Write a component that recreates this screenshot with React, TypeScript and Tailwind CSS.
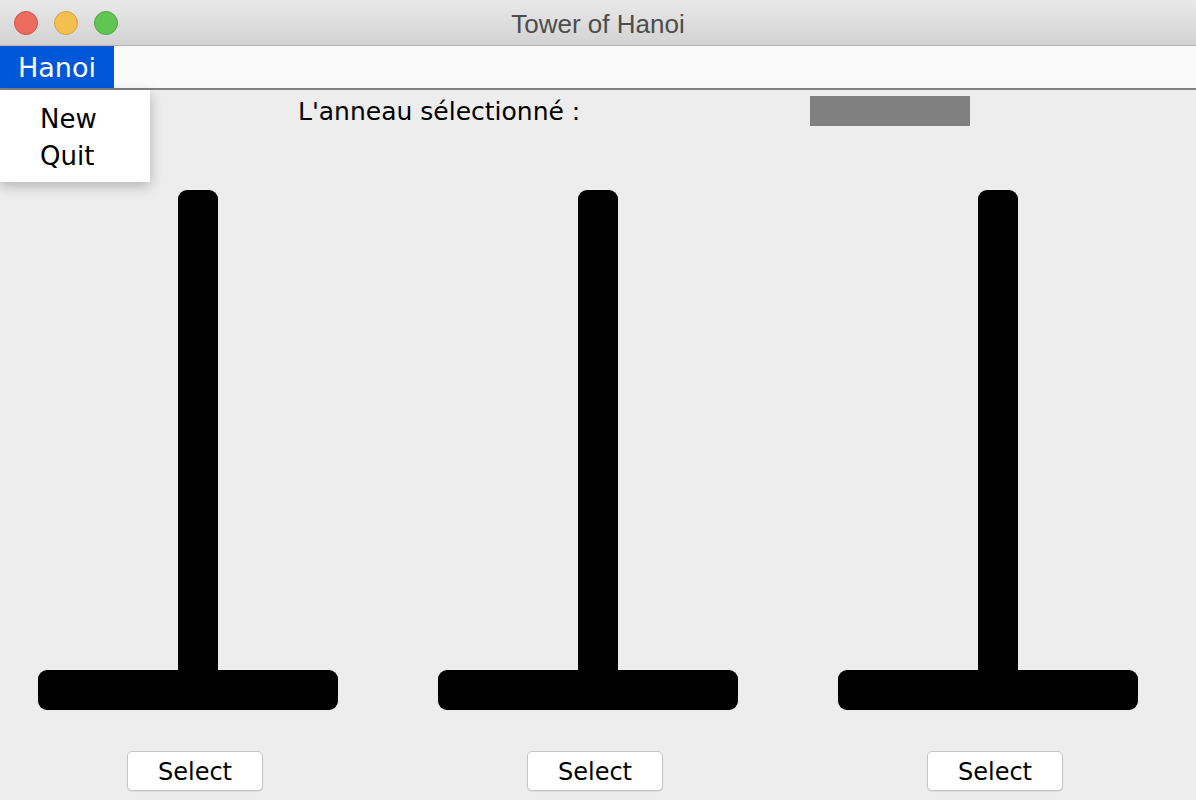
import React from 'react';

const font = { fontFamily: '"DejaVu Sans", "Open Sans", sans-serif' };

// Une tige avec sa base et son bouton
const Tower = () => (
  <div className="flex flex-col shrink-0 w-[400px] pl-[38px]">
    <div className="ml-[140px] w-[40px] h-[480px] bg-black rounded-t-[9px]" />
    <div className="w-[300px] h-[40px] bg-black rounded-[9px]" />
    <div className="ml-[89px] mt-[41px]">
      <button className="w-[136px] h-[40px] pt-[2px] bg-white border border-[#c4c4c4] rounded-[5px] text-[24px] text-black leading-none shadow-[0_1px_1px_rgba(0,0,0,0.08)]">
        Select
      </button>
    </div>
  </div>
);

const App = () => {
  return (
    <div className="w-[1196px] h-[800px] overflow-hidden bg-[#ededed] relative" style={font}>
      {/* Barre de titre */}
      <div className="h-[46px] flex items-center relative bg-gradient-to-b from-[#e9e9e9] to-[#d2d2d2] border-b border-[#b3b3b3]">
        <div className="flex gap-[16px] pl-[14px]">
          <span className="w-[24px] h-[24px] rounded-full bg-[#ed6a5e] border border-[#d25346]" />
          <span className="w-[24px] h-[24px] rounded-full bg-[#f5bf4f] border border-[#d6a13e]" />
          <span className="w-[24px] h-[24px] rounded-full bg-[#61c554] border border-[#4ea642]" />
        </div>
        <div className="absolute inset-0 pt-[3px] flex items-center justify-center text-[26px] text-[#4d4d4d]" style={{ fontFamily: '"Liberation Sans", Arial, sans-serif' }}>
          Tower of Hanoi
        </div>
      </div>

      {/* Barre de menu */}
      <div className="h-[44px] bg-[#fafafa] border-b-2 border-[#828282] flex">
        <div className="w-[114px] h-full pt-[3px] bg-[#0058d8] text-white text-[27px] flex items-center justify-center">Hanoi</div>
      </div>

      {/* Menu déroulant */}
      <div className="absolute left-0 top-[90px] w-[150px] h-[92px] bg-white shadow-[0_4px_12px_rgba(0,0,0,0.25)] flex flex-col pl-[40px] pt-[11px] text-[26px] text-black leading-[37px]">
        <span>New</span>
        <span>Quit</span>
      </div>

      {/* Anneau sélectionné */}
      <div className="flex items-center pt-[6px] pl-[298px] h-[36px]">
        <span className="text-[25px] text-black w-[512px] leading-none whitespace-nowrap">L'anneau sélectionné :</span>
        <div className="w-[160px] h-[30px] bg-[#808080]" />
      </div>

      {/* Tours */}
      <div className="flex pt-[64px]">
        <Tower />
        <Tower />
        <Tower />
      </div>
    </div>
  );
};

export default App;
